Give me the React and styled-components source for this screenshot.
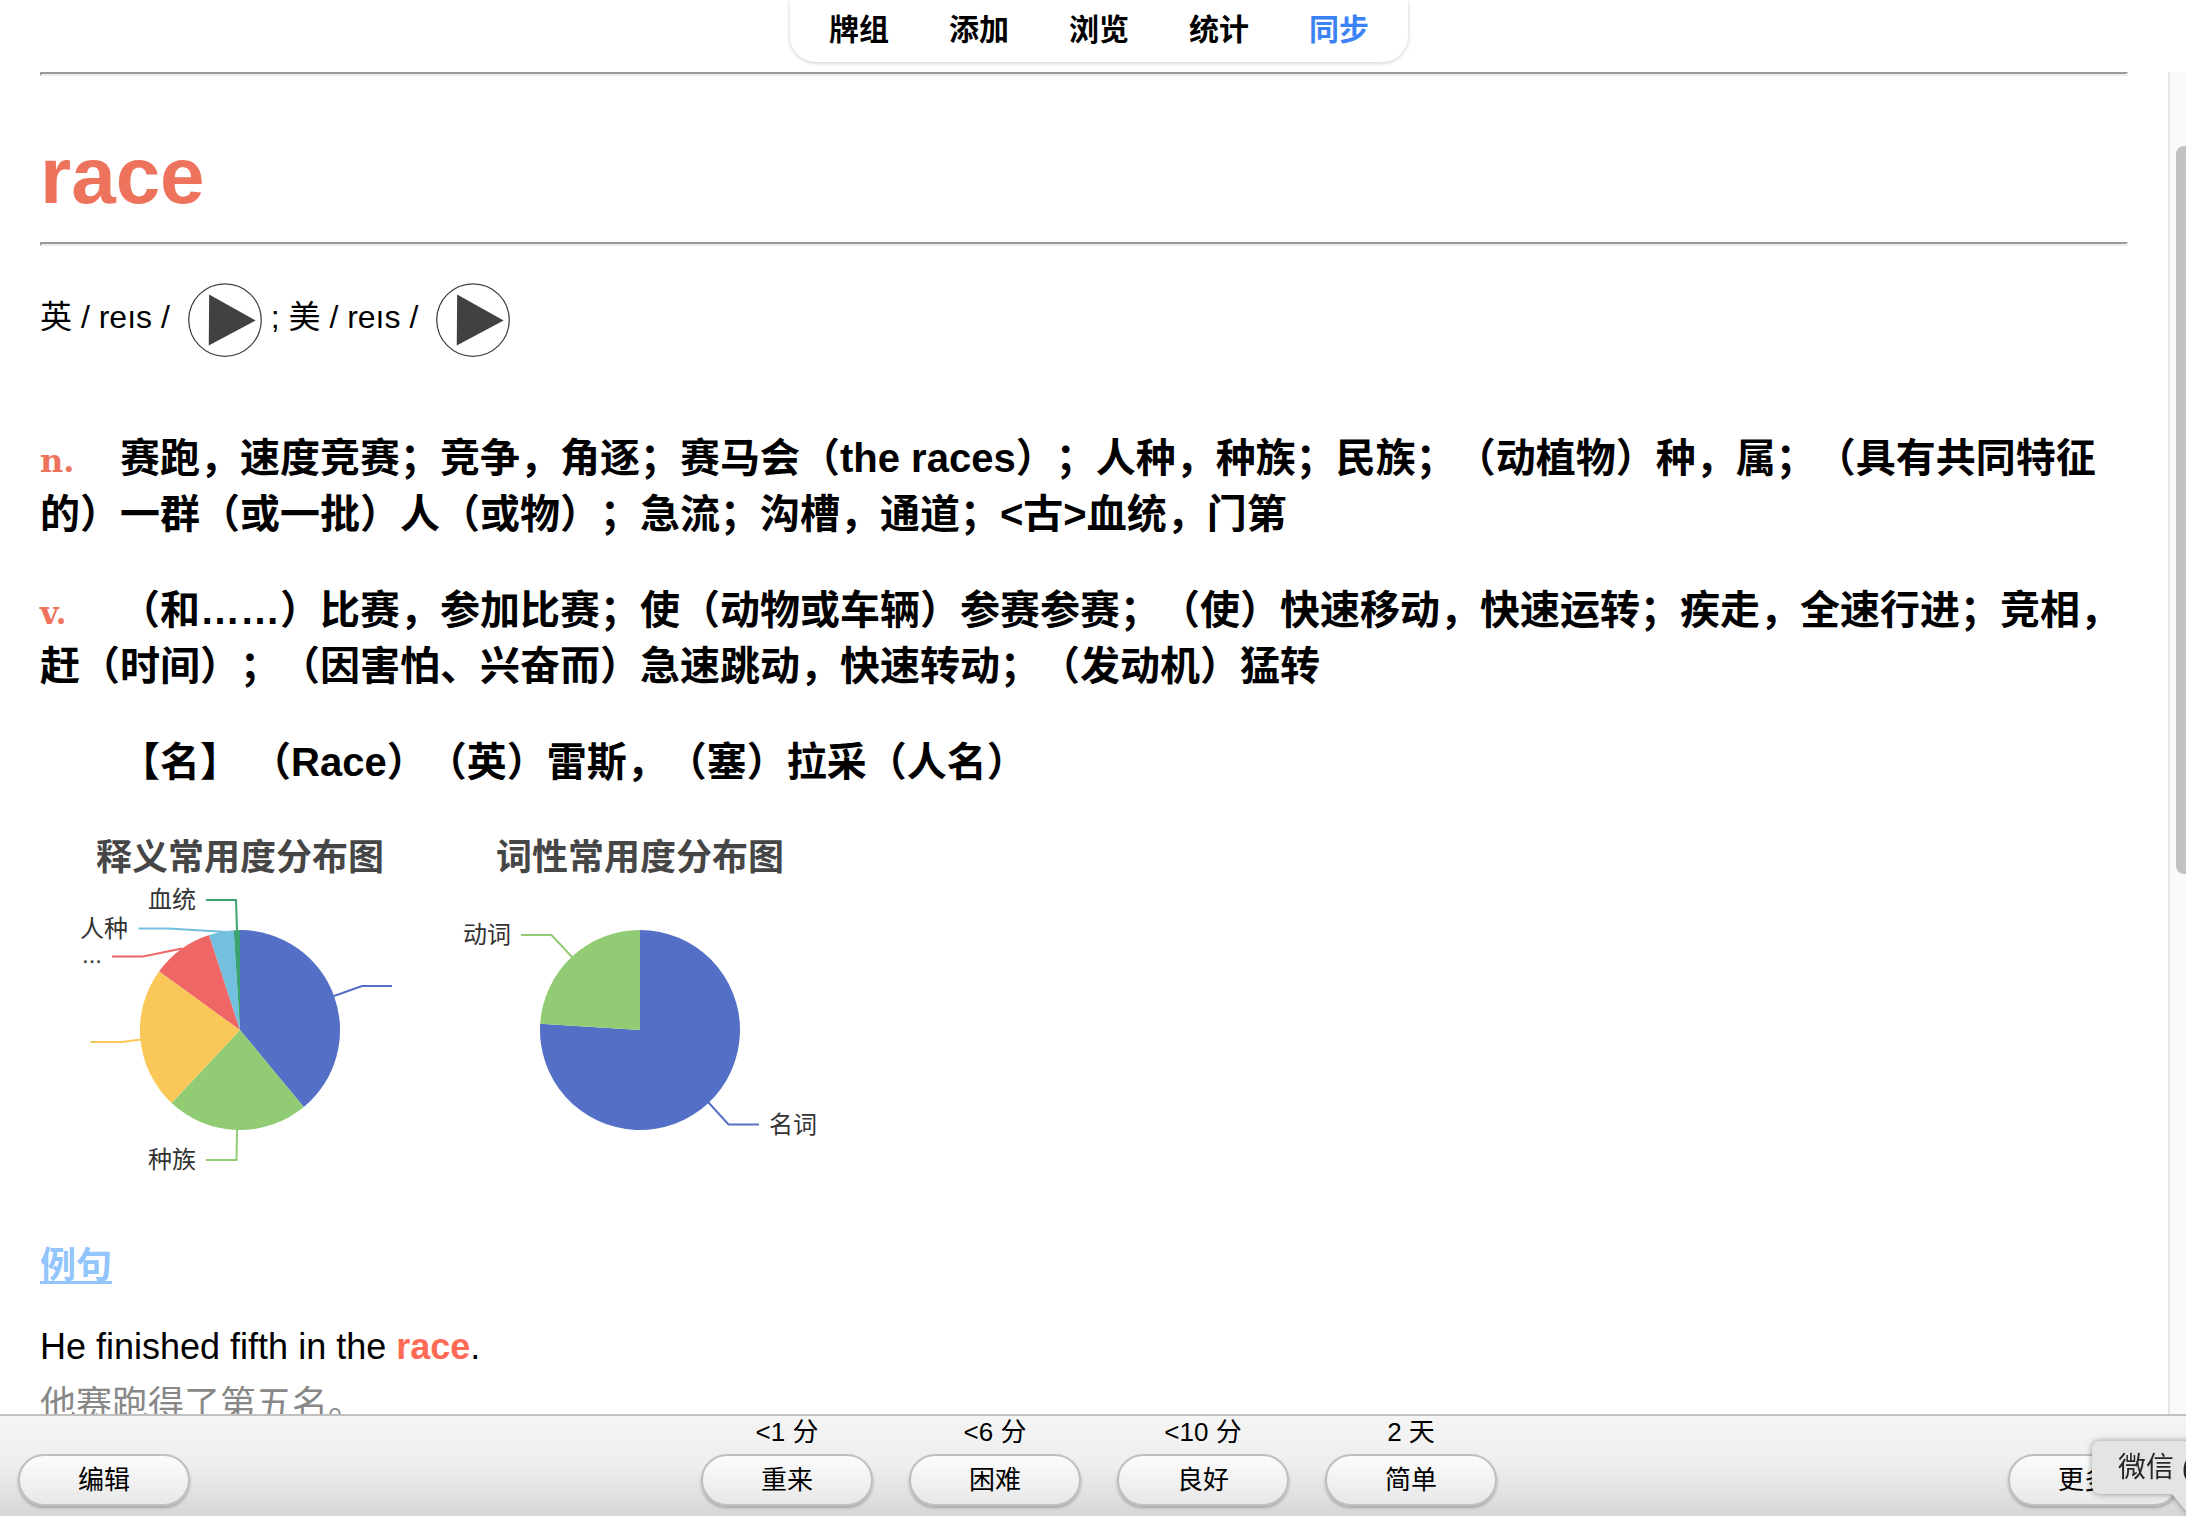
import React from 'react'
import styled, { createGlobalStyle } from 'styled-components'

const GlobalStyle = createGlobalStyle`
    * {
        box-sizing: border-box;
    }
    body {
        margin: 0;
        overflow: hidden;
        background-color: #fff;
        color: #000;
        font-family: "Liberation Sans", "Noto Sans CJK SC", sans-serif;
        text-spacing-trim: space-all;
    }
`
const Window = styled.div`
    position: relative;
    display: flex;
    flex-direction: column;
    height: 100vh;
    margin-right: -12px;
`
const Header = styled.header`
    display: flex;
    justify-content: center;
    padding-bottom: 10px;
`
const Nav = styled.nav`
    display: flex;
    gap: 60px;
    height: 62px;
    padding: 0 39px;
    border-radius: 0 0 26px 26px;
    background-color: #fff;
    box-shadow: 0 1px 4px rgba(0, 0, 0, 0.2);
`
const NavLink = styled.a`
    font-size: 30px;
    font-weight: bold;
    line-height: 60px;
    text-decoration: none;
    color: ${({$active}) => $active ? '#3b82f6' : '#000'};
`
const Body = styled.div`
    flex: 1;
    min-height: 0;
    display: flex;
`
const Card = styled.main`
    flex: 1;
    min-width: 0;
    padding: 0 40px;
    overflow: hidden;
`
const Rule = styled.hr`
    height: 4px;
    margin: 0;
    border: 2px solid;
    border-color: #9a9a9a #eee #eee #9a9a9a;
`
const Word = styled.h1`
    margin: 54px 0 20px;
    font-size: 80px;
    line-height: 92px;
    color: #ed735d;
`
const Phonetics = styled.div`
    margin: 34px 0 70px;
    font-size: 32px;
    line-height: 56px;
`
const PlayButton = styled.button`
    display: inline-flex;
    margin: 0 6px;
    padding: 0;
    border: none;
    background: none;
    vertical-align: middle;
    cursor: pointer;
    svg {
        width: 80px;
        height: 80px;
    }
    circle {
        fill: #fff;
        stroke: #414141;
    }
    path {
        fill: #414141;
    }
`
const Meaning = styled.p`
    margin: 0 0 40px;
    font-size: 40px;
    font-weight: bold;
    line-height: 56px;
`
const Pos = styled.span`
    display: inline-block;
    width: 80px;
    font-family: "DejaVu Serif", serif;
    font-size: 32px;
    line-height: 36px;
    color: #ed735d;
`
const Charts = styled.div`
    display: flex;
`
const Chart = styled.figure`
    width: 400px;
    margin: 0;
    svg {
        display: block;
        width: 100%;
    }
    text {
        font-size: 24px;
        fill: #333;
    }
`
const ChartTitle = styled.figcaption`
    font-size: 36px;
    font-weight: bold;
    line-height: 56px;
    text-align: center;
    color: #464646;
`
const Heading = styled.h2`
    margin: 10px 0 26px;
    font-size: 36px;
    line-height: 52px;
    color: #93c5fd;
    text-decoration: underline;
    text-decoration-thickness: 3px;
    text-decoration-skip-ink: none;
    text-underline-offset: 3px;
`
const Sentence = styled.p`
    margin: 0;
    font-size: 36px;
    line-height: 58px;
    color: ${({$muted}) => $muted ? '#888' : '#000'};
    b {
        color: #ff6a55;
    }
`
const Scrollbar = styled.div`
    width: 30px;
    padding: 74px 6px 0;
    border-left: 2px solid #e6e6e6;
    background-color: #fafafa;
`
const Thumb = styled.div`
    width: 16px;
    height: 728px;
    border-radius: 8px;
    background-color: #c1c1c1;
`
const Footer = styled.footer`
    display: flex;
    justify-content: space-between;
    align-items: flex-end;
    padding: 0 18px 10px;
    border-top: 2px solid #c0c0c0;
    background: linear-gradient(#f5f5f5, #eee 50%, #d6d6d6);
`
const Answers = styled.div`
    display: flex;
    gap: 36px;
`
const Answer = styled.div`
    display: flex;
    flex-direction: column;
    gap: 6px;
`
const Due = styled.label`
    font-size: 26px;
    line-height: 32px;
    text-align: center;
`
const Button = styled.button`
    width: 172px;
    height: 52px;
    padding: 0;
    border: 2px solid #bfbfbf;
    border-radius: 26px;
    background: linear-gradient(#fcfcfc, #e8e8e8);
    box-shadow: 0 2px 3px rgba(0, 0, 0, 0.25);
    font-family: inherit;
    font-size: 26px;
    line-height: 46px;
    color: #000;
    cursor: pointer;
`
const Tooltip = styled.div`
    position: absolute;
    right: 0;
    bottom: 22px;
    width: 106px;
    padding-left: 26px;
    border-radius: 8px 0 0 8px;
    background-color: #e4e4e2;
    filter: drop-shadow(0 0 3px rgba(0, 0, 0, 0.4));
    font-size: 28px;
    line-height: 53px;
    white-space: nowrap;
    color: #262626;
    svg {
        position: absolute;
        top: 100%;
        right: 0;
    }
`

const links = ['牌组', '添加', '浏览', '统计', '同步']

const answers = [
    { id: 'again', due: '<1 分', label: '重来' },
    { id: 'hard', due: '<6 分', label: '困难' },
    { id: 'good', due: '<10 分', label: '良好' },
    { id: 'easy', due: '2 天', label: '简单' },
]

const senseSlices = [
    { value: 39, color: '#5470c6', line: 'M294 166L322 156H352' },
    { value: 23, color: '#91cc75', line: 'M197 300L196.5 330H166', label: '种族', x: 156, y: 338 },
    { value: 23, color: '#fac858', line: 'M101 209.5L82 212H50.5' },
    { value: 10, color: '#ee6666', line: 'M142 118.5L103 126.5H72', label: '...', x: 62, y: 133 },
    { value: 4, color: '#73c0de', line: 'M187 102L128 98.5H98.5', label: '人种', x: 88, y: 107 },
    { value: 1, color: '#3ba272', line: 'M197 100L196 70H166', label: '血统', x: 156, y: 78 },
]

const posSlices = [
    { value: 76, color: '#5470c6', line: 'M268.5 272.5L288.5 294.5H319', label: '名词', x: 377, y: 303 },
    { value: 24, color: '#91cc75', line: 'M132 127L111.5 105H81', label: '动词', x: 71, y: 113 },
]

const CX = 200
const CY = 200
const R = 100

const point = (percent) => {
    const angle = percent / 100 * Math.PI * 2
    return `${CX + R * Math.sin(angle)} ${CY - R * Math.cos(angle)}`
}

function Pie({ title, slices }) {
    let total = 0
    return (
        <Chart>
            <ChartTitle>{title}</ChartTitle>
            <svg viewBox="0 56 400 344" role="img" aria-label={title}>
                {slices.map(({ value, color, line, label, x, y }) => {
                    const start = total
                    total += value
                    const large = value > 50 ? 1 : 0
                    return (
                        <g key={color}>
                            <path fill={color} d={`M${CX} ${CY}L${point(start)}A${R} ${R} 0 ${large} 1 ${point(total)}Z`}/>
                            <path fill="none" stroke={color} strokeWidth="2" d={line}/>
                            {label && <text x={x} y={y} textAnchor="end">{label}</text>}
                        </g>
                    )
                })}
            </svg>
        </Chart>
    )
}

function Play({ label }) {
    return (
        <PlayButton aria-label={label}>
            <svg viewBox="0 0 64 64">
                <circle cx="32" cy="32" r="29"/>
                <path d="M56.502,32.301l-37.502,20.101l0.329,-40.804l37.173,20.703Z"/>
            </svg>
        </PlayButton>
    )
}

export default function App() {
    return (
        <Window>
            <GlobalStyle/>
            <Header>
                <Nav>
                    {links.map(link => (
                        <NavLink key={link} href="#" $active={link === '同步'}>{link}</NavLink>
                    ))}
                </Nav>
            </Header>
            <Body>
                <Card lang="zh-CN">
                    <Rule/>
                    <Word>race</Word>
                    <Rule/>
                    <Phonetics>
                        英 / reıs / <Play label="英"/>; 美 / reıs / <Play label="美"/>
                    </Phonetics>
                    <Meaning>
                        <Pos>n.</Pos>赛跑，速度竞赛；竞争，角逐；赛马会（the races）；人种，种族；民族；（动植物）种，属；（具有共同特征的）一群（或一批）人（或物）；急流；沟槽，通道；&lt;古&gt;血统，门第
                    </Meaning>
                    <Meaning>
                        <Pos>v.</Pos>（和……）比赛，参加比赛；使（动物或车辆）参赛参赛；（使）快速移动，快速运转；疾走，全速行进；竞相，赶（时间）；（因害怕、兴奋而）急速跳动，快速转动；（发动机）猛转
                    </Meaning>
                    <Meaning>
                        <Pos/>【名】 （Race）（英）雷斯，（塞）拉采（人名）
                    </Meaning>
                    <Charts>
                        <Pie title="释义常用度分布图" slices={senseSlices}/>
                        <Pie title="词性常用度分布图" slices={posSlices}/>
                    </Charts>
                    <Heading>例句</Heading>
                    <Sentence>He finished fifth in the <b>race</b>.</Sentence>
                    <Sentence $muted>他赛跑得了第五名。</Sentence>
                </Card>
                <Scrollbar>
                    <Thumb/>
                </Scrollbar>
            </Body>
            <Footer>
                <Button>编辑</Button>
                <Answers>
                    {answers.map(({ id, due, label }) => (
                        <Answer key={id}>
                            <Due htmlFor={id}>{due}</Due>
                            <Button id={id}>{label}</Button>
                        </Answer>
                    ))}
                </Answers>
                <Button>更多 ▾</Button>
            </Footer>
            <Tooltip role="tooltip">
                微信 (
                <svg width="26" height="22" viewBox="0 0 26 22">
                    <path fill="#e4e4e2" d="M0 0H26V22H18Z"/>
                </svg>
            </Tooltip>
        </Window>
    )
}
